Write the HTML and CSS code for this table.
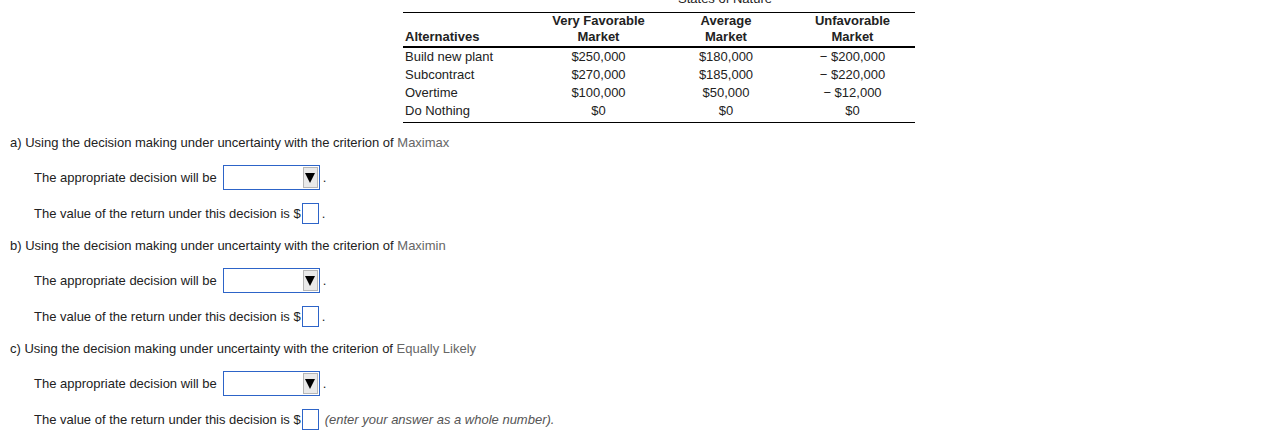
FILE: index.html
```html
<!DOCTYPE html>
<html lang="en">
<head>
<meta charset="utf-8">
<title>Decision making under uncertainty</title>
<link rel="stylesheet" href="styles.css">
</head>
<body>
<div class="page">
  <div class="table-wrap">
    <div class="caption-row">
      <div class="caption-spacer"></div>
      <div class="caption">States of Nature</div>
    </div>
    <table class="payoff">
      <colgroup>
        <col class="c1"><col class="c2"><col class="c3"><col class="c4">
      </colgroup>
      <thead>
        <tr>
          <th class="alt">Alternatives</th>
          <th>Very Favorable<br>Market</th>
          <th>Average<br>Market</th>
          <th>Unfavorable<br>Market</th>
        </tr>
      </thead>
      <tbody>
        <tr><td class="alt">Build new plant</td><td>$250,000</td><td>$180,000</td><td>&minus; $200,000</td></tr>
        <tr><td class="alt">Subcontract</td><td>$270,000</td><td>$185,000</td><td>&minus; $220,000</td></tr>
        <tr><td class="alt">Overtime</td><td>$100,000</td><td>$50,000</td><td>&minus; $12,000</td></tr>
        <tr class="last"><td class="alt">Do Nothing</td><td>$0</td><td>$0</td><td>$0</td></tr>
      </tbody>
    </table>
  </div>

  <section class="question">
    <p class="q-head">a) Using the decision making under uncertainty with the criterion of <span class="crit">Maximax</span></p>
    <div class="q-row select-row">
      <span>The appropriate decision will be</span>
      <span class="dropdown"><span class="dd-btn"><span class="tri"></span></span></span>
      <span class="dot">.</span>
    </div>
    <div class="q-row value-row">
      <span>The value of the return under this decision is $</span><span class="box"></span><span class="dot">.</span>
    </div>
  </section>

  <section class="question">
    <p class="q-head">b) Using the decision making under uncertainty with the criterion of <span class="crit">Maximin</span></p>
    <div class="q-row select-row">
      <span>The appropriate decision will be</span>
      <span class="dropdown"><span class="dd-btn"><span class="tri"></span></span></span>
      <span class="dot">.</span>
    </div>
    <div class="q-row value-row">
      <span>The value of the return under this decision is $</span><span class="box"></span><span class="dot">.</span>
    </div>
  </section>

  <section class="question">
    <p class="q-head">c) Using the decision making under uncertainty with the criterion of <span class="crit">Equally Likely</span></p>
    <div class="q-row select-row">
      <span>The appropriate decision will be</span>
      <span class="dropdown"><span class="dd-btn"><span class="tri"></span></span></span>
      <span class="dot">.</span>
    </div>
    <div class="q-row value-row">
      <span>The value of the return under this decision is $</span><span class="box"></span><span class="hint">(enter your answer as a whole number).</span>
    </div>
  </section>
</div>
</body>
</html>
```

FILE: styles.css
```css
html, body {
  margin: 0;
  padding: 0;
  background: #fff;
}

body {
  font-family: "Liberation Sans", Arial, sans-serif;
  font-size: 13px;
  color: #222;
  overflow: hidden;
}

.page {
  display: flex;
  flex-direction: column;
  width: 1286px;
  height: 446px;
}

/* ---------- payoff table ---------- */
.table-wrap {
  margin-top: -9px;
  margin-left: 403px;
  width: 512px;
}

.caption-row {
  display: flex;
  height: 16px;
  line-height: 16px;
  margin-bottom: 5px;
}

.caption-spacer {
  width: 132px;
}

.caption {
  flex: 1;
  text-align: center;
  color: #222;
}

.payoff {
  border-collapse: collapse;
  width: 512px;
  table-layout: fixed;
  border-top: 1px solid #000;
  border-bottom: 1px solid #000;
}

.c1 { width: 132px; }
.c2 { width: 127px; }
.c3 { width: 128px; }
.c4 { width: 125px; }

.payoff th {
  font-weight: bold;
  line-height: 16px;
  padding: 0 0 1px 0;
  text-align: center;
  vertical-align: bottom;
  border-bottom: 2px solid #000;
}

.payoff td {
  line-height: 18px;
  padding: 0;
  text-align: center;
}

.payoff .alt {
  text-align: left;
  padding-left: 2px;
}

.payoff tr.last td {
  padding-bottom: 2px;
}

/* ---------- questions ---------- */
.question {
  display: flex;
  flex-direction: column;
}

.question:first-of-type {
  margin-top: 12px;
}

.q-head {
  margin: 0;
  padding-left: 10px;
  line-height: 16px;
}

.question + .question .q-head {
  margin-top: 14px;
}

.crit {
  color: #666;
}

.q-row {
  display: flex;
  align-items: center;
  padding-left: 34px;
}

.select-row {
  margin-top: 14px;
  height: 25px;
}

.value-row {
  margin-top: 13px;
  height: 21px;
}

.dropdown {
  box-sizing: border-box;
  width: 97px;
  height: 25px;
  margin-left: 6px;
  border: 1px solid #2d64c8;
  background: #fff;
  display: flex;
  justify-content: flex-end;
  align-items: center;
  padding-right: 1px;
}

.dd-btn {
  box-sizing: border-box;
  width: 15px;
  height: 21px;
  background: #e9e9e9;
  border: 1px solid #b5b5b5;
  display: flex;
  align-items: center;
  justify-content: center;
}

.tri {
  width: 0;
  height: 0;
  border-left: 5px solid transparent;
  border-right: 5px solid transparent;
  border-top: 10px solid #000;
}

.dot {
  margin-left: 3px;
}

.box {
  box-sizing: border-box;
  width: 17px;
  height: 21px;
  border: 1px solid #2d64c8;
  background: #fff;
  margin-left: 1px;
}

.hint {
  margin-left: 6px;
  font-style: italic;
  color: #555;
}
```
